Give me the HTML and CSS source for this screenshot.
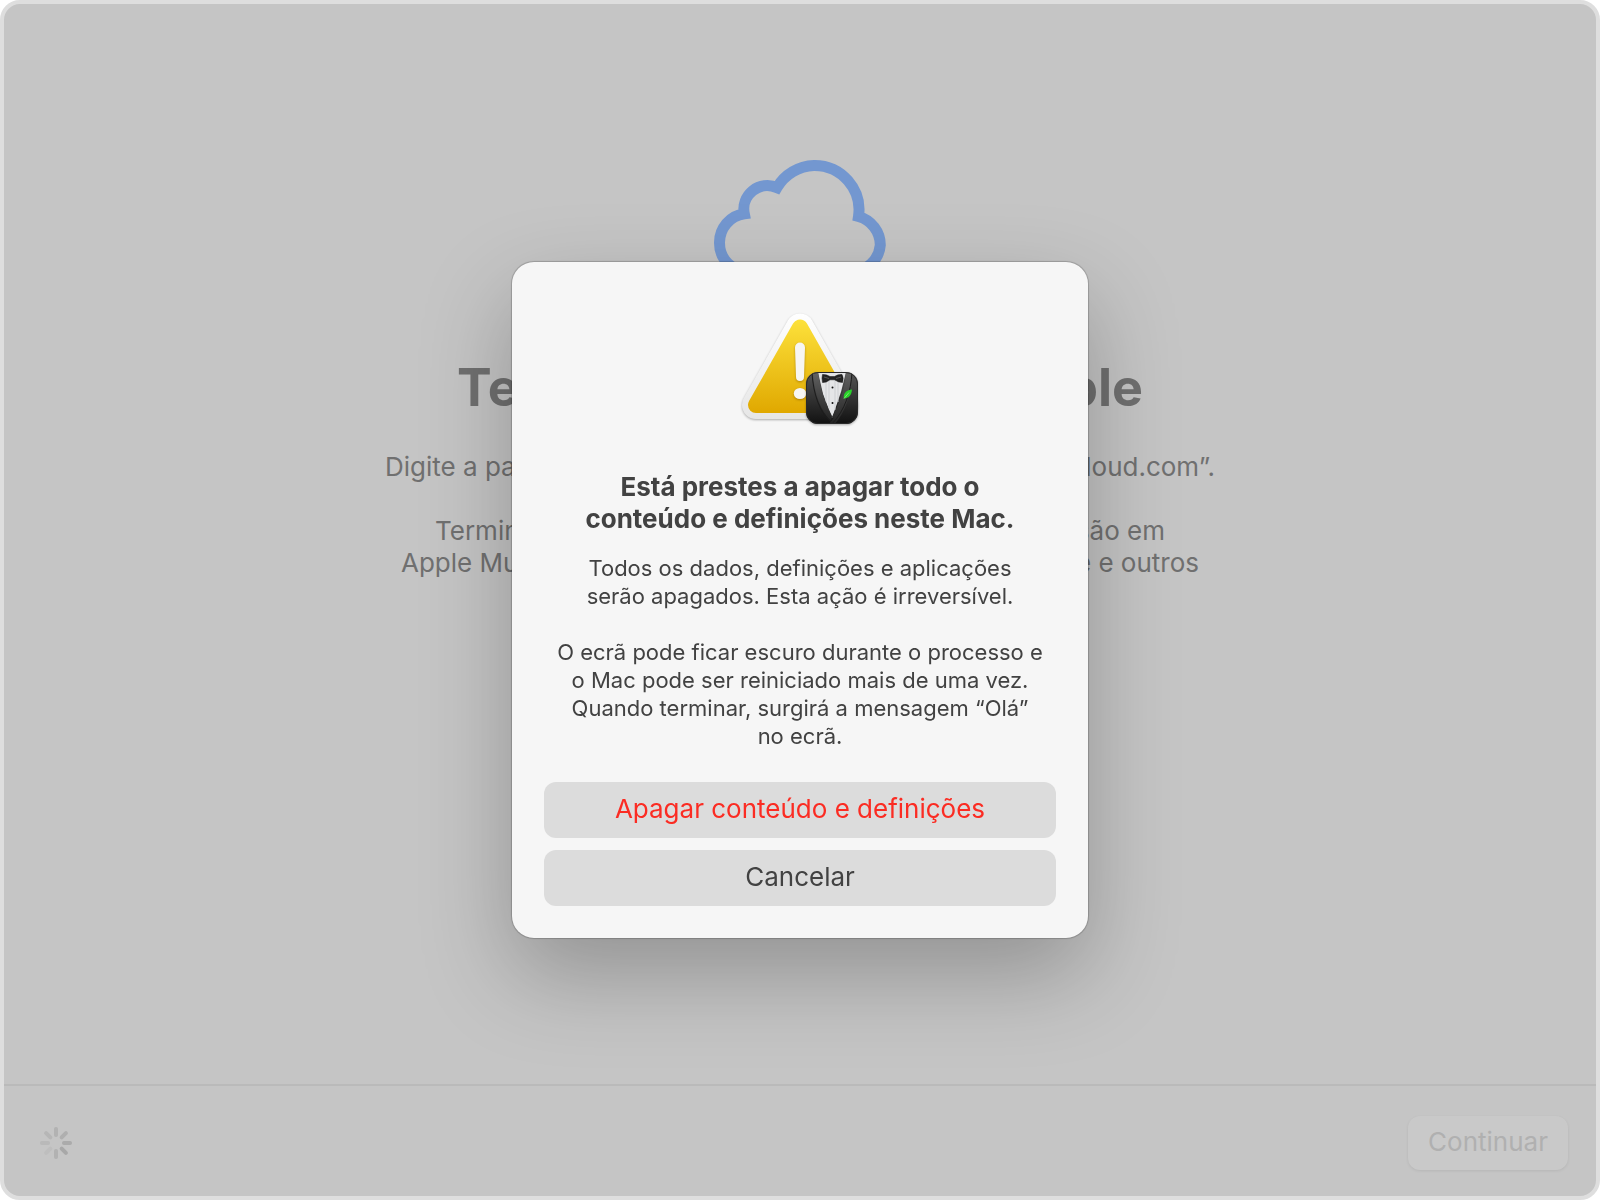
FILE: index.html
```html
<!DOCTYPE html>
<html lang="pt">
<head>
  <meta charset="UTF-8" />
  <title>Assistente de apagamento</title>
  <link rel="stylesheet" href="styles.css">
</head>
<body>

  <div class="window">
    <main class="content">
      <svg class="cloud" viewBox="0 0 200 140" aria-hidden="true">
        <path d="M48 122A28.600 29 0 0 1 19.500 93A28.600 29 0 0 1 44.300 63.800A23.600 23.600 0 0 1 77 37.600A44.500 44.500 0 0 1 114 15.500A44.500 44.500 0 0 1 158.500 66.500A29.600 29.600 0 0 1 180.300 95A29.600 29.600 0 0 1 151 122Z" />
      </svg>
      <h1 class="line line-title"><span>Terminar</span> <span>Apple</span></h1>
      <p class="line line-password"><span>Digite a palavra</span> <span>@icloud.com”.</span></p>
      <p class="line line-signout"><span>Terminar</span> <span>sessão em</span></p>
      <p class="line line-services"><span>Apple Music</span> <span>Store e outros</span></p>
    </main>

    <footer class="footer">
      <svg class="spinner" viewBox="-16 -16 32 32" aria-hidden="true">
        <path d="M0-8V-14" stroke="#b2b2b2" />
        <path d="M0-8V-14" stroke="#afafaf" transform="rotate(45)" />
        <path d="M0-8V-14" stroke="#ababab" transform="rotate(90)" />
        <path d="M0-8V-14" stroke="#a8a8a8" transform="rotate(135)" />
        <path d="M0-8V-14" stroke="#b2b2b2" transform="rotate(180)" />
        <path d="M0-8V-14" stroke="#bebebe" transform="rotate(225)" />
        <path d="M0-8V-14" stroke="#b9b9b9" transform="rotate(270)" />
        <path d="M0-8V-14" stroke="#b6b6b6" transform="rotate(315)" />
      </svg>
      <button class="continue" disabled>Continuar</button>
    </footer>
  </div>

  <div class="overlay">
    <section class="alert" role="alertdialog" aria-labelledby="alert-title">
      <svg class="alert-icon" viewBox="0 0 140 140" aria-hidden="true">
        <defs>
          <linearGradient id="yellow" gradientUnits="userSpaceOnUse" x1="0" y1="18" x2="0" y2="113">
            <stop offset="0" stop-color="#fde23c" />
            <stop offset="1" stop-color="#e0a800" />
          </linearGradient>
          <linearGradient id="rim" gradientUnits="userSpaceOnUse" x1="0" y1="13" x2="0" y2="119">
            <stop offset="0" stop-color="#ffffff" />
            <stop offset="1" stop-color="#e6e6e6" />
          </linearGradient>
          <linearGradient id="jacket" x1="0" y1="0" x2="0" y2="1">
            <stop offset="0" stop-color="#555" />
            <stop offset="1" stop-color="#111" />
          </linearGradient>
          <linearGradient id="lapel" x1="0" y1="0" x2="0" y2="1">
            <stop offset="0" stop-color="#626262" />
            <stop offset="1" stop-color="#222" />
          </linearGradient>
          <clipPath id="badge"><rect x="76" y="72" width="52" height="52" rx="12" /></clipPath>
        </defs>
        <g class="triangle">
          <path d="M70 27.500L114 105H26Z" fill="url(#rim)" stroke="url(#rim)" stroke-width="28" stroke-linejoin="round" />
          <path d="M70 27.500L114 105H26Z" fill="url(#yellow)" stroke="url(#yellow)" stroke-width="16" stroke-linejoin="round" />
        </g>
        <g class="mark">
          <path d="M65 47.500a5 5 0 0 1 10 0L74 77a4 4 0 0 1-8 0Z" />
          <ellipse cx="70" cy="93.500" rx="6.200" ry="5.600" />
        </g>
        <g class="tuxedo">
          <g clip-path="url(#badge)">
            <rect x="76" y="72" width="52" height="52" fill="url(#jacket)" />
            <path d="M88 72H116L111 92L102 118L93 94Z" fill="#e4e5e7" />
            <path d="M96 79V102M99 79V110M105 79V110M108 79V102" stroke="#cdcfd2" fill="none" />
            <path d="M88 72L83 73C84 92 90 110 101 121L102 116C94 100 90 88 88 72Z" fill="url(#lapel)" />
            <path d="M116 72L121 73C120 91 112 108 99 124H105C115 112 122 94 121 73M116 72C115 88 110 103 102 117L104 118C115 105 120 88 121 73Z" fill="url(#lapel)" />
            <path d="M82 72C83 94 90 113 101 122M122 72C121 92 115 110 102 124" fill="none" stroke="#1c1c1c" />
            <path d="M92.500 74.500Q96 74 100 76.500H104.500Q108 74 112 74.500Q114 78 112.500 82.500Q108 82.500 104.500 79.800H100Q96 83 92.500 82.500Q91.500 78 92.500 74.500Z" fill="#242424" stroke="#111" stroke-width="0.500" />
            <path d="M94 77L99 78.500M111 77L106 78.500" stroke="#555" />
            <circle cx="102.500" cy="87.500" r="1" fill="#111" />
            <circle cx="102.500" cy="103" r="1" fill="#111" />
          </g>
          <path d="M113.800 98.500C113 92.500 117 90 122 89.500C121.500 95 119 98.500 113.800 98.500Z" fill="#28d32a" />
          <path d="M114 98.500L119 92.500" stroke="#9df58a" stroke-width="0.700" />
          <rect x="76.500" y="72.500" width="51" height="51" rx="11.500" fill="none" stroke="#2a2a2a" />
        </g>
      </svg>

      <h2 class="alert-title" id="alert-title">Está prestes a apagar todo o<br>conteúdo e definições neste Mac.</h2>
      <p class="alert-text">Todos os dados, definições e aplicações<br>serão apagados. Esta ação é irreversível.</p>
      <p class="alert-text">O ecrã pode ficar escuro durante o processo e<br>o Mac pode ser reiniciado mais de uma vez.<br>Quando terminar, surgirá a mensagem “Olá”<br>no ecrã.</p>

      <div class="alert-buttons">
        <button class="danger">Apagar conteúdo e definições</button>
        <button>Cancelar</button>
      </div>
    </section>
  </div>

</body>
</html>
```
FILE: styles.css
```css
* {
  box-sizing: border-box;
}
body {
  margin: 0;
  background: #fff;
  font-family: Inter, "Liberation Sans", sans-serif;
  color: #424242;
}
h1, h2, p {
  margin: 0;
}
button {
  border: 0;
  font-family: inherit;
  font-size: 26px;
  line-height: 32px;
  color: inherit;
}

.window {
  display: flex;
  flex-direction: column;
  min-height: 100vh;
  background: #c5c5c5;
  border: 4px solid #dedede;
  border-radius: 20px;
}
.content {
  flex: 1;
  display: flex;
  flex-direction: column;
  align-items: center;
  padding-top: 146px;
  color: #707070;
}
.cloud {
  width: 200px;
  height: 140px;
  margin-bottom: 66px;
}
.cloud path {
  fill: none;
  stroke: #7397d0;
  stroke-width: 11;
}

/* each line runs on behind the alert */
.line {
  display: flex;
  justify-content: space-between;
  font-size: 26px;
  line-height: 32px;
  white-space: nowrap;
}
.line-title {
  width: 686px;
  font-size: 52px;
  line-height: 64px;
  margin-bottom: 31px;
}
.line-password {
  width: 830px;
  margin-bottom: 32px;
}
.line-signout {
  width: 730px;
}
.line-services {
  width: 798px;
}

.footer {
  display: flex;
  align-items: center;
  justify-content: space-between;
  padding: 30px 28px 26px 36px;
  border-top: 2px solid #bababa;
}
.spinner {
  width: 32px;
  height: 32px;
}
.spinner path {
  stroke-width: 4;
  stroke-linecap: round;
}
.continue {
  width: 160px;
  height: 54px;
  padding: 0 0 2px;
  border-radius: 12px;
  background: #c9c9c9;
  box-shadow: 0 1px 3px rgba(0, 0, 0, 0.08);
  color: #b0b0b0;
}

.overlay {
  position: fixed;
  inset: 0;
  display: flex;
  align-items: center;
  justify-content: center;
}
.alert {
  width: 576px;
  padding: 38px 32px 32px;
  border-radius: 22px;
  background: #f6f6f6;
  box-shadow: 0 0 1px 1px rgba(0, 0, 0, 0.2), 0 36px 90px rgba(0, 0, 0, 0.26);
  text-align: center;
}
.alert-icon {
  display: block;
  width: 140px;
  height: 140px;
  margin: 0 auto 31px;
}
.triangle, .tuxedo {
  filter: drop-shadow(0 1px 1px rgba(0, 0, 0, 0.3));
}
.mark {
  fill: #f7f6f2;
  filter: drop-shadow(0 1px 1px rgba(120, 80, 0, 0.5));
}
.alert-title {
  font-size: 26px;
  line-height: 32px;
  margin-bottom: 19px;
}
.alert-text {
  font-size: 22px;
  line-height: 28px;
  margin-bottom: 28px;
}
.alert-buttons {
  display: flex;
  flex-direction: column;
  gap: 12px;
  padding-top: 4px;
}
.alert-buttons button {
  height: 56px;
  padding: 0 0 2px;
  border-radius: 12px;
  background: #dcdcdc;
}
.alert-buttons .danger {
  color: #fb2c23;
}
```
